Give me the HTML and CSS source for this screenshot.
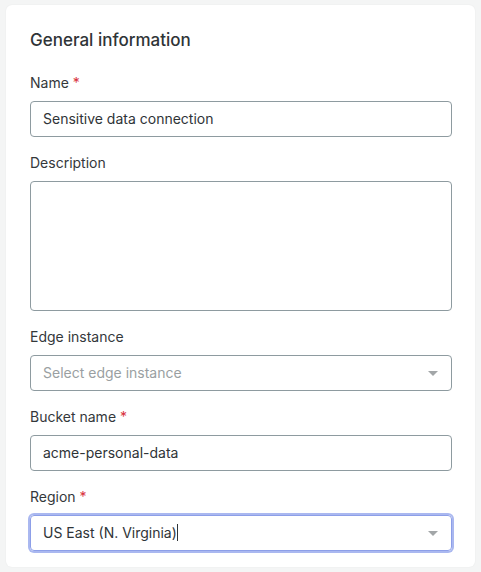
FILE: index.html
```html
<!DOCTYPE html>
<html>
<head>
<meta charset="utf-8">
<link rel="stylesheet" href="styles.css">
</head>
<body>
<div class="card">
  <h2 class="title">General information</h2>
  <div class="field">
    <div class="label">Name <span class="req">*</span></div>
    <div class="input">Sensitive data connection</div>
  </div>
  <div class="field">
    <div class="label">Description</div>
    <div class="input textarea"></div>
  </div>
  <div class="field">
    <div class="label">Edge instance</div>
    <div class="input select"><span class="placeholder">Select edge instance</span><span class="caret"></span></div>
  </div>
  <div class="field">
    <div class="label">Bucket name <span class="req">*</span></div>
    <div class="input">acme-personal-data</div>
  </div>
  <div class="field">
    <div class="label">Region <span class="req">*</span></div>
    <div class="input select focused"><span>US East (N. Virginia)<span class="cursor"></span></span><span class="caret"></span></div>
  </div>
</div>
</body>
</html>
```
FILE: styles.css
```css
html, body { margin: 0; padding: 0; }
body {
  background: #f4f5f5;
  font-family: Inter, "Noto Sans", sans-serif;
  color: #2f3437;
  padding: 5px 6px 6px 6px;
}
.card {
  background: #fff;
  border-radius: 6px;
  box-shadow: 0 0 2px rgba(0,0,0,0.06);
  padding: 24px 23px 16px 24px;
  display: flex;
  flex-direction: column;
  gap: 16px;
}
.title {
  margin: 0 0 6px 0;
  font-size: 17px;
  font-weight: 500;
  line-height: 22px;
  color: #2f3437;
}
.field { display: flex; flex-direction: column; gap: 8px; }
.label { font-size: 14px; line-height: 20px; color: #34383b; }
.req { color: #d8323c; }
.input {
  box-sizing: border-box;
  height: 36px;
  border: 1px solid #8e9ba0;
  border-radius: 4px;
  padding: 0 12px;
  font-size: 14px;
  line-height: 34px;
  color: #2f3437;
  display: flex;
  align-items: center;
}
.textarea { height: 130px; }
.select { justify-content: space-between; }
.placeholder { color: #9a9fa2; }
.caret {
  width: 0; height: 0;
  border-left: 5px solid transparent;
  border-right: 5px solid transparent;
  border-top: 5px solid #a2a6a8;
  margin-right: 1px;
}
.focused {
  border: 1px solid #8d9fe8;
  box-shadow: 0 0 0 2px #aab8f0;
}
.cursor {
  display: inline-block;
  width: 1px;
  height: 17px;
  background: #2f3437;
  vertical-align: -3px;
}
```
